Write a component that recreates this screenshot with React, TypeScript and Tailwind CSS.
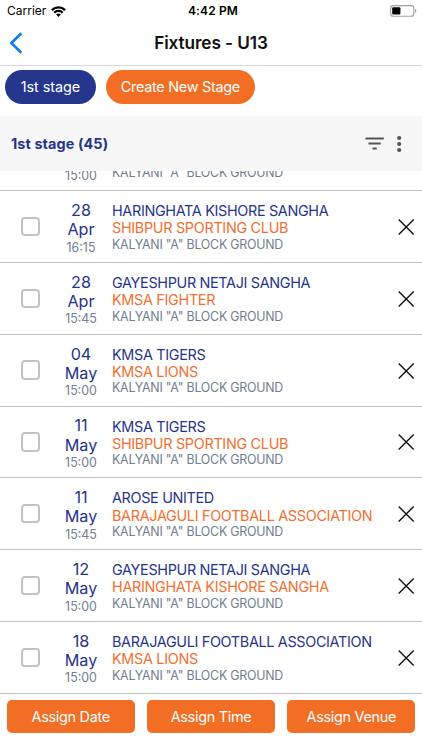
import React from 'react';

interface Fixture {
  day?: string;
  month?: string;
  time: string;
  home?: string;
  away?: string;
}

const VENUE = 'KALYANI "A" BLOCK GROUND';

const fixtures: Fixture[] = [
  { time: '15:00' },
  { day: '28', month: 'Apr', time: '16:15', home: 'HARINGHATA KISHORE SANGHA', away: 'SHIBPUR SPORTING CLUB' },
  { day: '28', month: 'Apr', time: '15:45', home: 'GAYESHPUR NETAJI SANGHA', away: 'KMSA FIGHTER' },
  { day: '04', month: 'May', time: '15:00', home: 'KMSA TIGERS', away: 'KMSA LIONS' },
  { day: '11', month: 'May', time: '15:00', home: 'KMSA TIGERS', away: 'SHIBPUR SPORTING CLUB' },
  { day: '11', month: 'May', time: '15:45', home: 'AROSE UNITED', away: 'BARAJAGULI FOOTBALL ASSOCIATION' },
  { day: '12', month: 'May', time: '15:00', home: 'GAYESHPUR NETAJI SANGHA', away: 'HARINGHATA KISHORE SANGHA' },
  { day: '18', month: 'May', time: '15:00', home: 'BARAJAGULI FOOTBALL ASSOCIATION', away: 'KMSA LIONS' },
];

function StatusBar() {
  return (
    <div className="grid h-[22px] shrink-0 grid-cols-3 items-center pr-[5px] pl-[7px]">
      <div className="flex items-center gap-[5px] text-[12px]">
        <span>Carrier</span>
        <svg width="15" height="11" viewBox="0 0 15 11" fill="none" stroke="#000" strokeWidth="2.3">
          <path d="M0.900 4.100a9.300 9.300 0 0 1 13.200 0" />
          <path d="M3.300 6.700a5.900 5.900 0 0 1 8.400 0" />
          <path d="M7.500 10.900 5.200 8.600a3.300 3.300 0 0 1 4.600 0z" fill="#000" stroke="none" />
        </svg>
      </div>
      <div className="pl-[2px] text-center text-[12px] font-semibold tracking-[0.15px]">4:42 PM</div>
      <svg className="mb-[1px] justify-self-end" width="27" height="12" viewBox="0 0 27 12">
        <rect x="0.6" y="0.6" width="23.2" height="10.6" rx="2.8" fill="none" stroke="#a0a0a0" strokeWidth="1.1" />
        <rect x="2.2" y="2.2" width="8.2" height="7.4" rx="1" fill="#000" />
        <path d="M25 4v4c1.8-.8 1.8-3.200 0-4z" fill="#a0a0a0" />
      </svg>
    </div>
  );
}

function NavBar() {
  return (
    <div className="grid h-[44px] shrink-0 grid-cols-[40px_1fr_40px] items-center border-b border-[#d8d8dc] pb-[1px]">
      <svg className="ml-[9px]" width="14" height="22" viewBox="0 0 14 22" fill="none" stroke="#0a7aff" strokeWidth="2.6">
        <path d="M12.300 1.200 2.300 11l10 9.800" />
      </svg>
      <h1 className="text-center text-[17.2px] font-semibold tracking-[-0.08px] text-[#111]">Fixtures - U13</h1>
    </div>
  );
}

function FixtureRow({ fixture }: { fixture: Fixture }) {
  return (
    <div className="flex h-[71.8px] shrink-0 items-center border-b border-[#c4c4c4]">
      <div className="ml-[20.500px] size-[19.500px] rounded-[4px] border-2 border-[#c3c3c3]" />
      <div className="ml-[16px] flex w-[50px] flex-col items-center pt-[2.500px] text-[#26348b]">
        <span className="h-[19.300px] text-[16.200px] leading-[19.300px]">{fixture.day}</span>
        <span className="h-[19.300px] text-[16.200px] leading-[19.300px]">{fixture.month}</span>
        <span className="text-[12.400px] leading-[15px] text-[#708090]">{fixture.time}</span>
      </div>
      <div className="ml-[6px] flex flex-1 flex-col pt-[1.200px] whitespace-nowrap">
        <span className="h-[17.300px] text-[14.400px] leading-[17.300px] tracking-[-0.33px] text-[#26348b]">
          {fixture.home}
        </span>
        <span className="h-[17.300px] text-[14.400px] leading-[17.300px] tracking-[-0.31px] text-[#f07030]">
          {fixture.away}
        </span>
        <span className="text-[12.400px] leading-[15.300px] tracking-[-0.23px] text-[#708090]">{VENUE}</span>
      </div>
      <svg className="mt-[1px] mr-[7px]" width="18" height="18" viewBox="0 0 18 18" stroke="#111" strokeWidth="1.4">
        <path d="M1.700 1.500l15 15M16.700 1.500l-15 15" />
      </svg>
    </div>
  );
}

export default function App() {
  return (
    <div className="flex h-[750px] w-[422px] flex-col overflow-hidden bg-white font-['Inter',sans-serif] text-black">
      <StatusBar />
      <NavBar />
      <div className="flex h-[50px] shrink-0 gap-[10px] pt-[4.300px] pl-[5.300px] text-[14.400px] text-white">
        <button className="h-[33.800px] w-[90.300px] rounded-full bg-[#25368c] tracking-[-0.05px]">1st stage</button>
        <button className="h-[33.800px] w-[149.500px] rounded-full bg-[#f16e24] tracking-[-0.26px]">
          Create New Stage
        </button>
      </div>
      <div className="flex h-[55px] shrink-0 items-center bg-[#f7f7f7] pr-[20px] pl-[11px]">
        <h2 className="flex-1 text-[14.400px] font-bold tracking-[0.12px] text-[#26348b]">1st stage (45)</h2>
        <svg width="19" height="13" viewBox="0 0 19 13" fill="#555">
          <path d="M0.500 0.500h18.300v2H0.500zM3.500 5.500h12.300v2H3.500zM7.500 10.500h4.300v2H7.500z" />
        </svg>
        <svg className="ml-[12px]" width="6" height="18" viewBox="0 0 6 18" fill="#555">
          <circle cx="3.2" cy="3" r="2.1" />
          <circle cx="3.2" cy="9" r="2.1" />
          <circle cx="3.2" cy="15" r="2.1" />
        </svg>
      </div>
      <div className="flex h-[522.700px] shrink-0 flex-col justify-end overflow-hidden">
        {fixtures.map((fixture, i) => (
          <FixtureRow key={i} fixture={fixture} />
        ))}
      </div>
      <div className="flex gap-[12px] px-[6.500px] pt-[6px] text-[14.400px] tracking-[-0.28px] text-white">
        <button className="h-[33.500px] flex-1 rounded-[5px] bg-[#f16e24]">Assign Date</button>
        <button className="h-[33.500px] flex-1 rounded-[5px] bg-[#f16e24]">Assign Time</button>
        <button className="h-[33.500px] flex-1 rounded-[5px] bg-[#f16e24]">Assign Venue</button>
      </div>
    </div>
  );
}
